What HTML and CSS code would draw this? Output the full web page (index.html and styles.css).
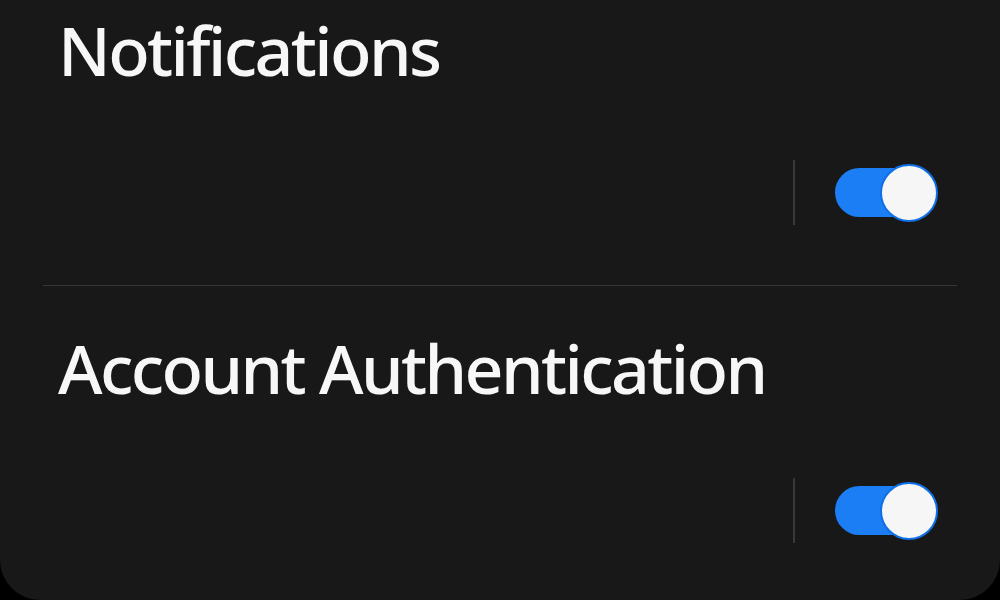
FILE: index.html
```html
<!DOCTYPE html>
<html lang="en">
<head>
  <meta charset="UTF-8" />
  <meta name="viewport" content="width=device-width, initial-scale=1" />
  <title>Settings</title>
  <link rel="stylesheet" href="styles.css">
</head>
<body>

  <div class="card">
    <div class="item">
      <div class="item-title">Notifications</div>
      <div class="item-action">
        <span class="vbar"></span>
        <span class="switch on"><span class="track"></span><span class="thumb"></span></span>
      </div>
    </div>
    <div class="item">
      <div class="item-title">Account Authentication</div>
      <div class="item-action">
        <span class="vbar"></span>
        <span class="switch on"><span class="track"></span><span class="thumb"></span></span>
      </div>
    </div>
  </div>

</body>
</html>
```

FILE: styles.css
```css
html, body {
  margin: 0;
  padding: 0;
  background: #000;
}
body {
  font-family: "Noto Sans", "Open Sans", sans-serif;
  color: #f7f7f7;
  width: 1000px;
  height: 600px;
  overflow: hidden;
}
.card {
  background: #181818;
  height: 600px;
  border-radius: 0 0 40px 40px;
  padding: 0 43px;
  box-sizing: border-box;
}
.item {
  border-bottom: 1px solid #363636;
}
.item:last-child {
  border-bottom: none;
}
.item + .item {
  padding-top: 32px;
}
.item-title {
  padding-left: 15px;
  font-size: 68px;
  font-weight: 500;
  letter-spacing: -2.6px;
  line-height: 100px;
  white-space: nowrap;
}
.item-action {
  display: flex;
  justify-content: flex-end;
  align-items: center;
  gap: 40px;
  padding: 60px 19px 60px 0;
}
.vbar {
  width: 2px;
  height: 65px;
  background: #383838;
}
.switch {
  position: relative;
  width: 103px;
  height: 58px;
}
.switch .track {
  position: absolute;
  left: 0;
  top: 4px;
  width: 95px;
  height: 49px;
  border-radius: 25px;
  background: #1c7ef5;
}
.switch .thumb {
  position: absolute;
  right: 0;
  top: 0;
  width: 54px;
  height: 54px;
  border-radius: 50%;
  background: #f6f6f6;
  border: 2px solid #0f6fe6;
}
```
